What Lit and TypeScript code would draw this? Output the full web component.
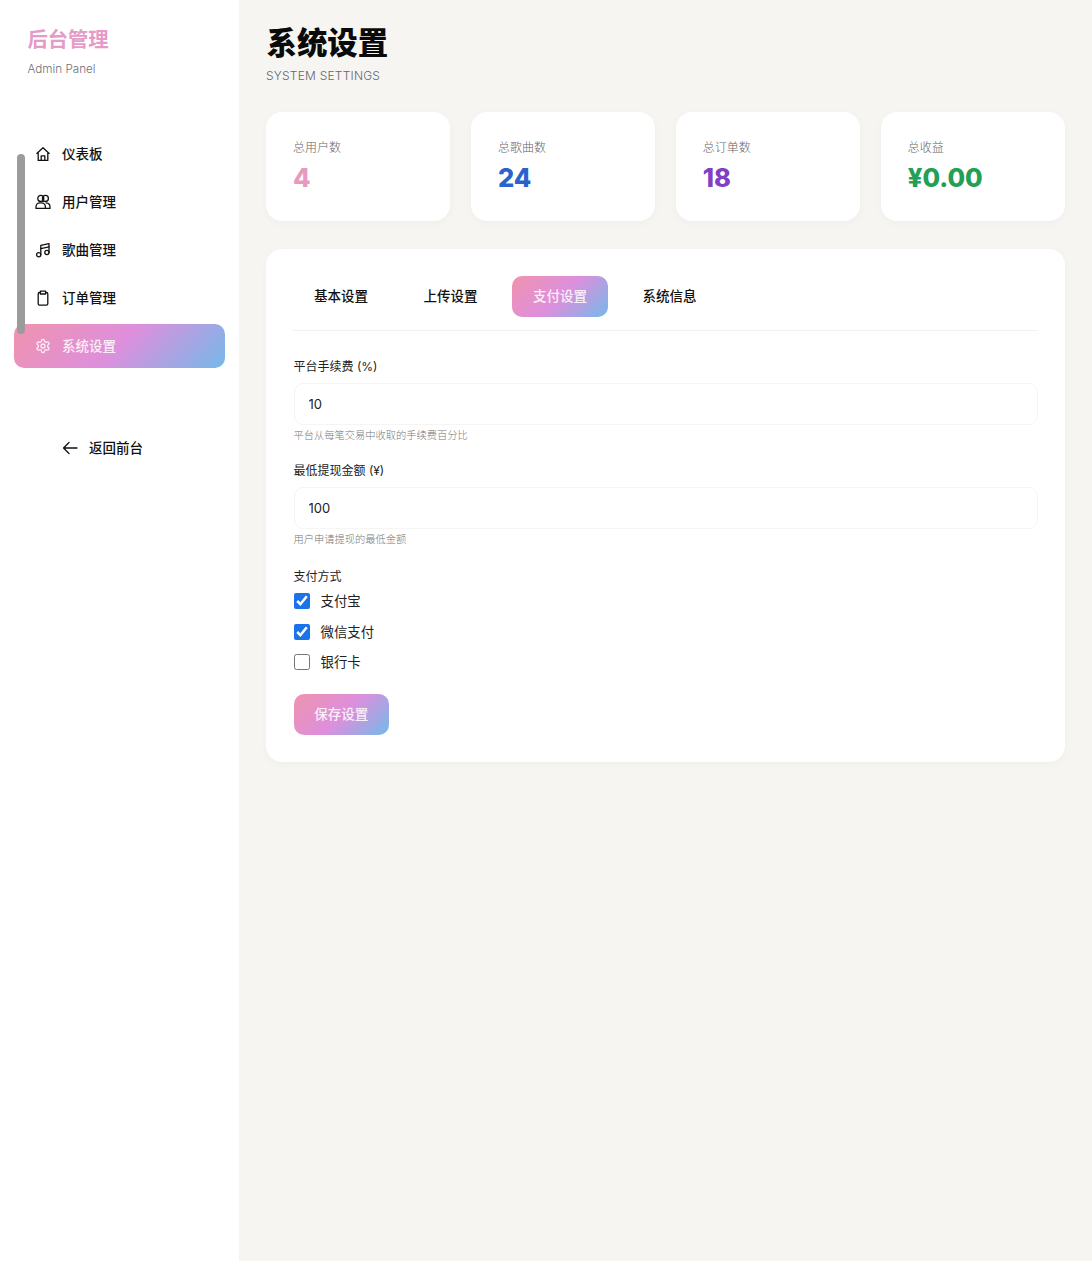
import { LitElement, html, css, svg } from "lit";
import { customElement } from "lit/decorators.js";

const icons: Record<string, unknown> = {
  home: svg`<path d="M1.800 7.400 8 1.800l6.200 5.600M3.200 6.400v8h9.600v-8"/><path d="M6.200 14.400V9.800h3.600v4.600"/>`,
  users: svg`<circle cx="5.800" cy="4.400" r="3"/><circle cx="10.400" cy="4.400" r="3"/><path d="M1 14.400v-1.500c0-2.200 1.800-4 4-4h1.400c2.200 0 4 1.800 4 4v1.500z"/><path d="M11 8.900c2.300.2 4 1.800 4 4v1.500h-4.600"/>`,
  music: svg`<path d="M5.800 12.600V3.400L14 1.600v8.800"/><circle cx="3.700" cy="12.700" r="2.100"/><circle cx="11.900" cy="10.500" r="2.100"/><path d="M5.800 6.600 14 4.800"/>`,
  clip: svg`<path d="M5.400 2.500H4.600c-.8 0-1.400.6-1.400 1.400v9.800c0 .8.6 1.400 1.400 1.400h6.800c.8 0 1.400-.6 1.400-1.400V3.900c0-.8-.6-1.400-1.400-1.400h-.8"/><path d="M5.400 1.200h5.200v2.800H5.400z"/>`,
  gear: svg`<g transform="scale(.6667)" stroke-width="1.900"><path d="M12.220 2h-.44a2 2 0 0 0-2 2v.18a2 2 0 0 1-1 1.730l-.43.25a2 2 0 0 1-2 0l-.15-.08a2 2 0 0 0-2.730.73l-.22.38a2 2 0 0 0 .73 2.730l.15.1a2 2 0 0 1 1 1.720v.51a2 2 0 0 1-1 1.740l-.15.09a2 2 0 0 0-.73 2.730l.22.38a2 2 0 0 0 2.730.73l.15-.08a2 2 0 0 1 2 0l.43.25a2 2 0 0 1 1 1.730V20a2 2 0 0 0 2 2h.44a2 2 0 0 0 2-2v-.18a2 2 0 0 1 1-1.730l.43-.25a2 2 0 0 1 2 0l.15.08a2 2 0 0 0 2.730-.73l.22-.39a2 2 0 0 0-.73-2.730l-.15-.08a2 2 0 0 1-1-1.740v-.5a2 2 0 0 1 1-1.740l.15-.09a2 2 0 0 0 .73-2.730l-.22-.38a2 2 0 0 0-2.730-.73l-.15.08a2 2 0 0 1-2 0l-.43-.25a2 2 0 0 1-1-1.730V4a2 2 0 0 0-2-2z"/><circle cx="12" cy="12" r="3"/></g>`,
};

const nav = [
  ["home", "仪表板"],
  ["users", "用户管理"],
  ["music", "歌曲管理"],
  ["clip", "订单管理"],
  ["gear", "系统设置"],
];

const stats = [
  ["总用户数", "4", "pink"],
  ["总歌曲数", "24", "blue"],
  ["总订单数", "18", "purple"],
  ["总收益", "¥0.00", "green"],
];

const tabs = ["基本设置", "上传设置", "支付设置", "系统信息"];
const pays: [string, boolean][] = [["支付宝", true], ["微信支付", true], ["银行卡", false]];

@customElement("app-root")
export class AppRoot extends LitElement {
  static styles = css`
    :host {
      display: flex;
      min-height: 1261px;
      background: #f6f5f2;
      color: #111;
      font-family: Inter, "Noto Sans CJK SC", sans-serif;
      --grad: linear-gradient(135deg, #f093ae 0%, #dd8fdc 50%, #74b9ea 100%);
    }
    .side {
      position: relative;
      box-sizing: border-box;
      width: 239px;
      flex: none;
      background: #fff;
      padding: 27px 14px 0;
    }
    .brand { padding-left: 13.500px; height: 105px; }
    .brand h1 {
      margin: 0;
      font-size: 20.300px;
      line-height: 26px;
      font-weight: 700;
      color: #e59ac8;
    }
    .brand p {
      margin: 7px 0 0;
      font-size: 11.700px;
      line-height: 18px;
      font-weight: 300;
      color: #6f6f75;
    }
    .thumb {
      position: absolute;
      left: 17px;
      top: 154px;
      width: 8px;
      height: 180px;
      border-radius: 4px;
      background: #9b9b9b;
      z-index: 1;
    }
    nav { display: flex; flex-direction: column; gap: 4px; }
    .item {
      display: flex;
      align-items: center;
      gap: 11px;
      height: 44px;
      width: 211px;
      padding-left: 21px;
      box-sizing: border-box;
      font-size: 13.500px;
      font-weight: 500;
      border-radius: 10px;
    }
    .item span, .back span { line-height: 20px; }
    .item.on {
      background: var(--grad);
      color: #fbeef8;
    }
    .item svg, .back svg {
      width: 16px;
      height: 16px;
      flex: none;
      fill: none;
      stroke: currentColor;
      stroke-width: 1.300;
      stroke-linejoin: round;
      stroke-linecap: round;
    }
    .item svg { margin-top: -1px; }
    .back {
      display: flex;
      align-items: center;
      gap: 11px;
      margin: 70px 0 0 48px;
      height: 20px;
      font-size: 13.500px;
      font-weight: 500;
    }
    main {
      flex: 1;
      min-width: 0;
      padding: 23px 27px 0;
    }
    .title {
      margin: 0 0 0 0.500px;
      font-size: 30.400px;
      line-height: 40px;
      font-weight: 900;
      color: #0a0a0a;
    }
    .sub {
      margin: 3px 0 0;
      font-size: 12px;
      line-height: 19.500px;
      font-weight: 300;
      letter-spacing: 0.220px;
      color: #66666c;
    }
    .stats {
      display: grid;
      grid-template-columns: repeat(4, 1fr);
      gap: 20.500px;
      margin-top: 26.500px;
    }
    .stat {
      box-sizing: border-box;
      height: 109px;
      padding: 27px 27px 0;
      background: #fff;
      border-radius: 16px;
      box-shadow: 0 2px 8px rgba(0, 0, 0, 0.03);
    }
    .stat span {
      display: block;
      font-size: 12px;
      line-height: 18px;
      font-weight: 300;
      color: #66666c;
    }
    .stat b {
      display: block;
      margin-top: 5px;
      font-size: 25.500px;
      line-height: 32px;
      font-weight: 800;
    }
    .pink { color: #e79ac0; }
    .blue { color: #2a63cc; }
    .purple { color: #7f3fc6; }
    .green { color: #23a055; }
    .panel {
      box-sizing: border-box;
      height: 513px;
      margin-top: 28px;
      padding: 27px 27px 0;
      background: #fff;
      border-radius: 16px;
      box-shadow: 0 2px 8px rgba(0, 0, 0, 0.03);
    }
    .tabs {
      display: flex;
      gap: 13.500px;
      height: 54px;
      border-bottom: 1px solid #f1f1f0;
    }
    .tab {
      display: flex;
      align-items: center;
      justify-content: center;
      box-sizing: border-box;
      width: 96px;
      height: 41px;
      padding-bottom: 1px;
      border-radius: 10px;
      font-size: 13.500px;
      line-height: 20px;
      font-weight: 500;
    }
    .tab.on { background: var(--grad); color: #fbeef8; }
    .field { margin: 26px 0 0 0.500px; }
    .field + .field { margin-top: 18px; }
    label.h {
      display: block;
      font-size: 12px;
      line-height: 20px;
      font-weight: 400;
      color: #222;
    }
    input.txt {
      display: block;
      box-sizing: border-box;
      width: 100%;
      height: 42px;
      margin-top: 6px;
      padding: 0 14px;
      border: 1px solid #f5f5f3;
      border-radius: 9px;
      background: #fff;
      font: 400 13px Inter, "Noto Sans CJK SC", sans-serif;
      color: #222;
      outline: none;
    }
    .hint {
      margin: 2px 0 0;
      font-size: 10.250px;
      line-height: 16px;
      font-weight: 300;
      color: #77777c;
    }
    .pay { margin: 21px 0 0 0.500px; }
    .pay .h { line-height: 18px; }
    .opts { display: flex; flex-direction: column; gap: 10.500px; margin-top: 5px; }
    .opt {
      display: flex;
      align-items: center;
      gap: 11px;
      height: 20px;
      font-size: 13.400px;
      font-weight: 400;
      color: #222;
    }
    .opt span { margin-top: -2px; }
    .opt input {
      width: 16px;
      height: 16px;
      margin: 0;
      accent-color: #1a73e8;
    }
    .save {
      display: block;
      box-sizing: border-box;
      width: 95.500px;
      height: 41px;
      margin: 21.500px 0 0 0.500px;
      padding: 0 0 1px;
      border: 0;
      border-radius: 10px;
      background: var(--grad);
      color: #fbeef8;
      font: 500 13.500px/20px Inter, "Noto Sans CJK SC", sans-serif;
    }
  `;

  render() {
    return html`
      <aside class="side">
        <div class="thumb"></div>
        <div class="brand">
          <h1>后台管理</h1>
          <p>Admin Panel</p>
        </div>
        <nav>
          ${nav.map(
            ([ic, label], i) => html`
              <div class="item ${i === 4 ? "on" : ""}">
                <svg viewBox="0 0 16 16">${icons[ic]}</svg>
                <span>${label}</span>
              </div>
            `
          )}
        </nav>
        <div class="back">
          <svg viewBox="0 0 16 16"><path d="M15 8H1.500M7 2.500 1.500 8 7 13.500"/></svg>
          <span>返回前台</span>
        </div>
      </aside>
      <main>
        <h2 class="title">系统设置</h2>
        <p class="sub">SYSTEM SETTINGS</p>
        <section class="stats">
          ${stats.map(
            ([k, v, c]) => html`<div class="stat"><span>${k}</span><b class=${c}>${v}</b></div>`
          )}
        </section>
        <section class="panel">
          <div class="tabs">
            ${tabs.map((t, i) => html`<div class="tab ${i === 2 ? "on" : ""}">${t}</div>`)}
          </div>
          <div class="field">
            <label class="h">平台手续费 (%)</label>
            <input class="txt" value="10" />
            <p class="hint">平台从每笔交易中收取的手续费百分比</p>
          </div>
          <div class="field">
            <label class="h">最低提现金额 (¥)</label>
            <input class="txt" value="100" />
            <p class="hint">用户申请提现的最低金额</p>
          </div>
          <div class="pay">
            <label class="h">支付方式</label>
            <div class="opts">
              ${pays.map(
                ([p, on]) => html`
                  <label class="opt"><input type="checkbox" .checked=${on} /><span>${p}</span></label>
                `
              )}
            </div>
          </div>
          <button class="save">保存设置</button>
        </section>
      </main>
    `;
  }
}
